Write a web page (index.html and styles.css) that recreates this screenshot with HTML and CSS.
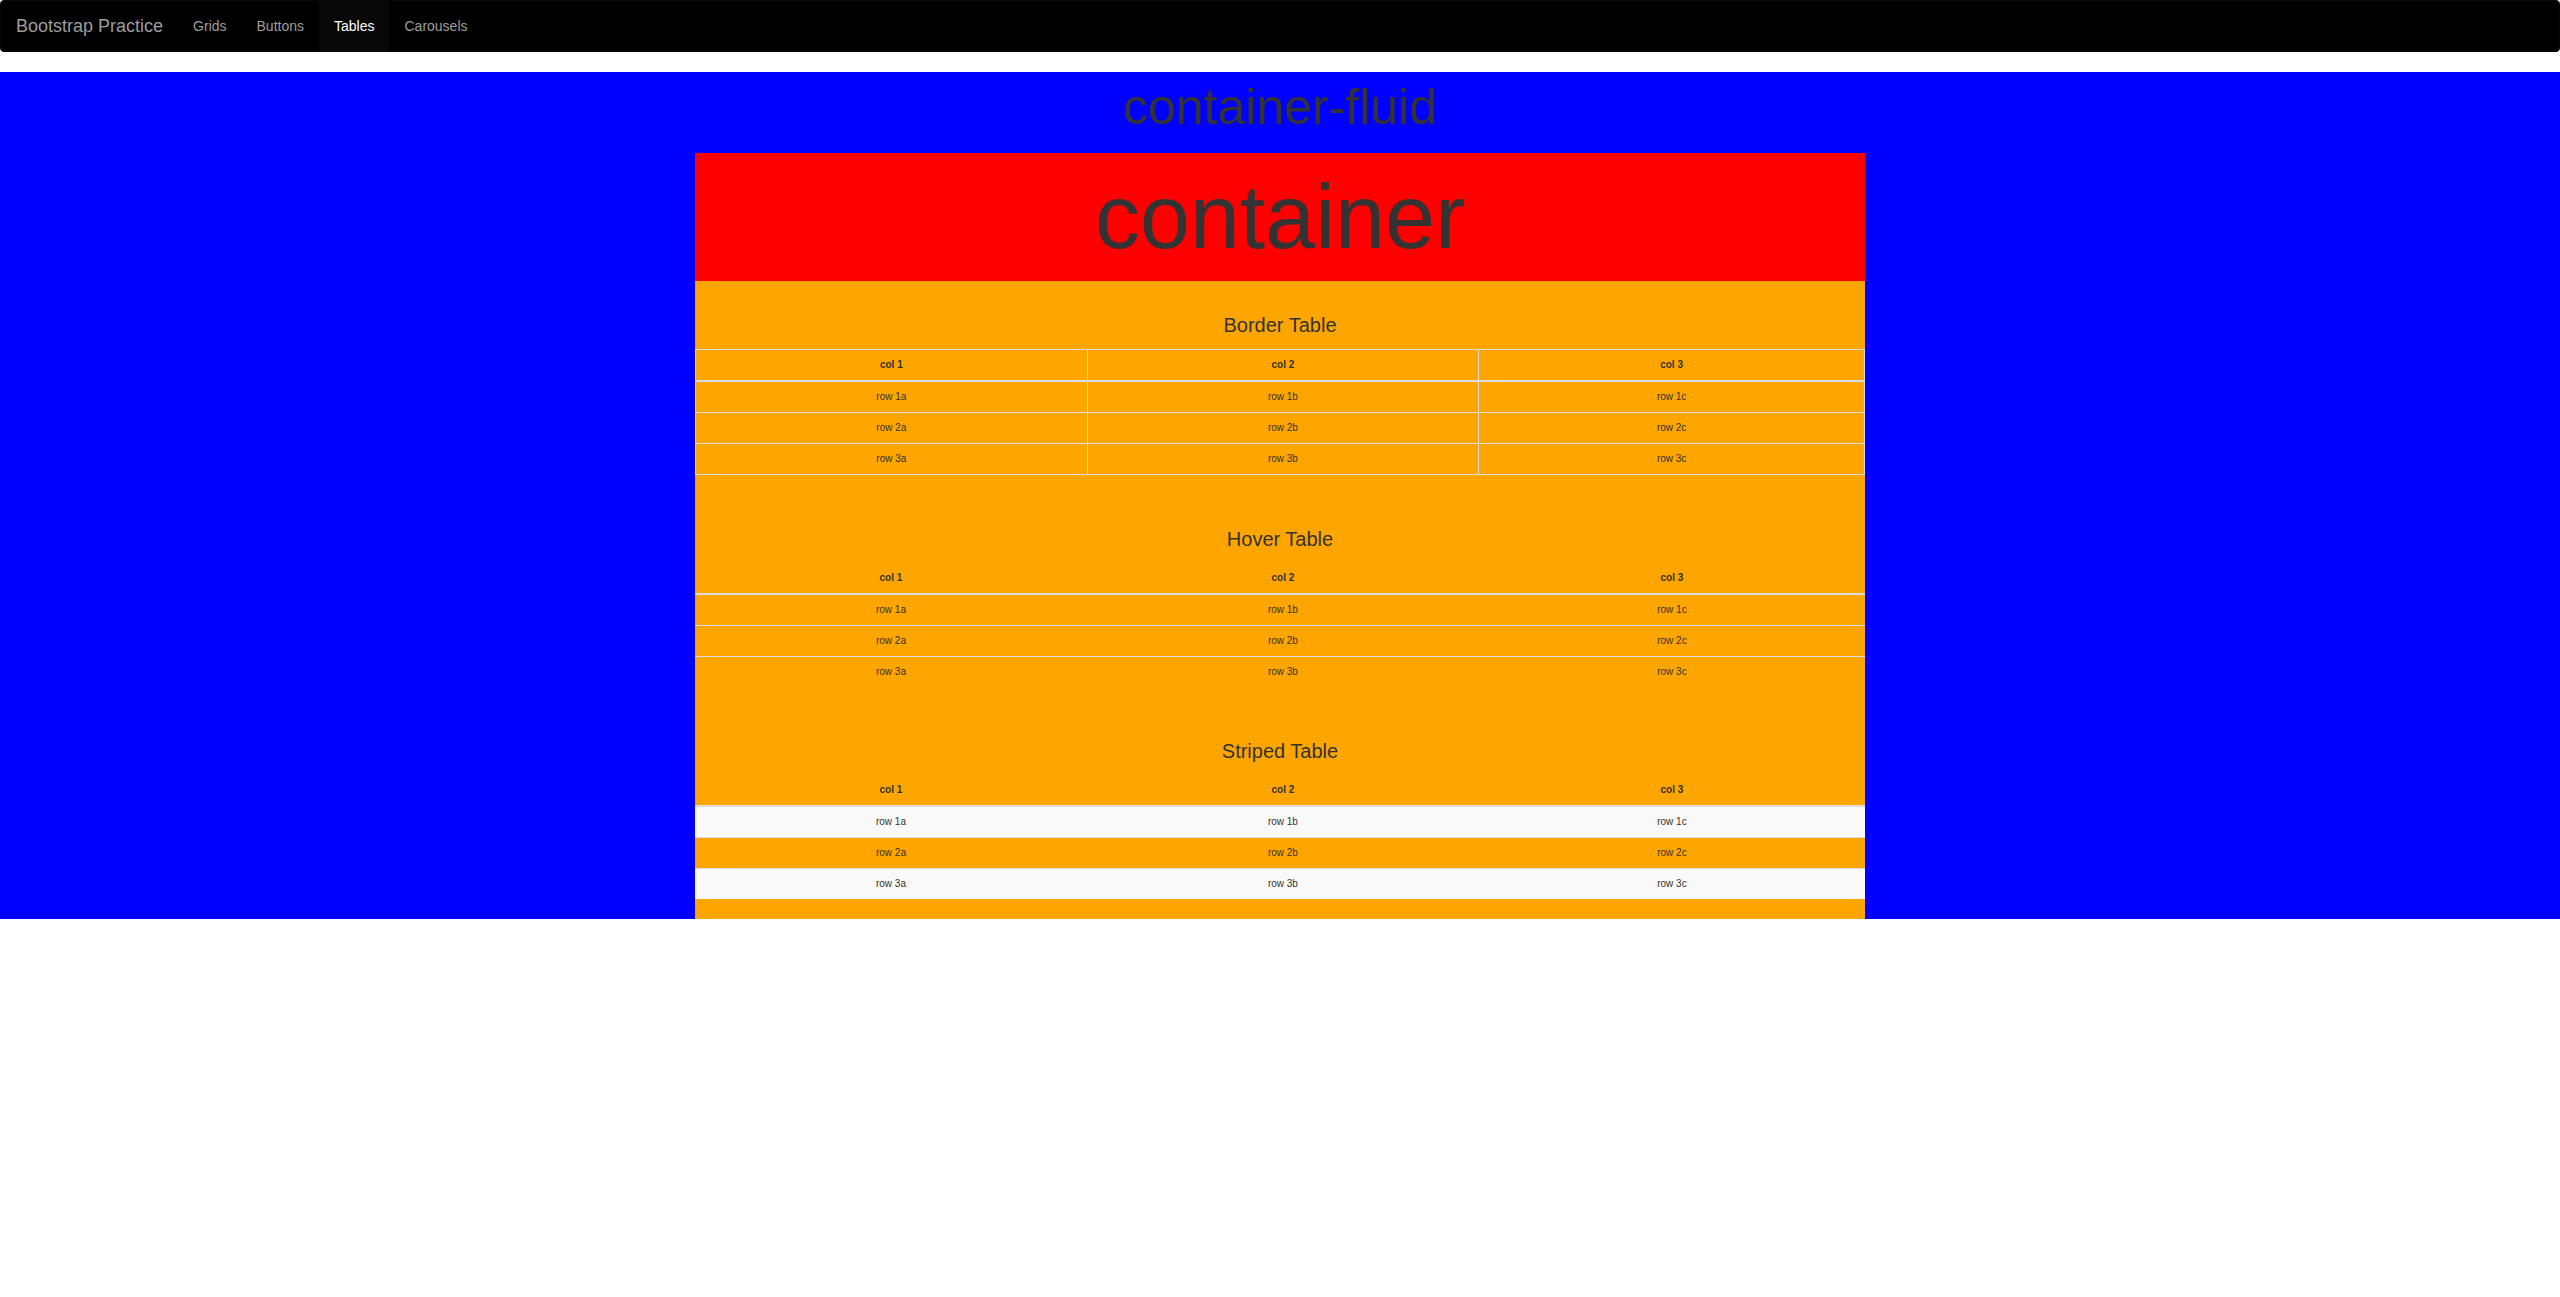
FILE: index.html
```html
<!DOCTYPE html>
<html lang="en">
<head>
<meta charset="utf-8">
<title>Bootstrap Practice</title>
<link rel="stylesheet" href="styles.css">
</head>
<body>
<nav class="navbar">
  <a class="brand" href="#">Bootstrap Practice</a>
  <ul class="nav">
    <li><a href="#">Grids</a></li>
    <li><a href="#">Buttons</a></li>
    <li><a class="active" href="#">Tables</a></li>
    <li><a href="#">Carousels</a></li>
  </ul>
</nav>
<div class="container-fluid">
  <p class="fluid-title">container-fluid</p>
  <main class="container">
    <h1>container</h1>
    <section>
      <h2>Border Table</h2>
      <table class="table bordered">
        <thead><tr><th>col 1</th><th>col 2</th><th>col 3</th></tr></thead>
        <tbody>
          <tr><td>row 1a</td><td>row 1b</td><td>row 1c</td></tr>
          <tr><td>row 2a</td><td>row 2b</td><td>row 2c</td></tr>
          <tr><td>row 3a</td><td>row 3b</td><td>row 3c</td></tr>
        </tbody>
      </table>
    </section>
    <section>
      <h2>Hover Table</h2>
      <table class="table hover">
        <thead><tr><th>col 1</th><th>col 2</th><th>col 3</th></tr></thead>
        <tbody>
          <tr><td>row 1a</td><td>row 1b</td><td>row 1c</td></tr>
          <tr><td>row 2a</td><td>row 2b</td><td>row 2c</td></tr>
          <tr><td>row 3a</td><td>row 3b</td><td>row 3c</td></tr>
        </tbody>
      </table>
    </section>
    <section>
      <h2>Striped Table</h2>
      <table class="table striped">
        <thead><tr><th>col 1</th><th>col 2</th><th>col 3</th></tr></thead>
        <tbody>
          <tr><td>row 1a</td><td>row 1b</td><td>row 1c</td></tr>
          <tr><td>row 2a</td><td>row 2b</td><td>row 2c</td></tr>
          <tr><td>row 3a</td><td>row 3b</td><td>row 3c</td></tr>
        </tbody>
      </table>
    </section>
  </main>
</div>
</body>
</html>
```
FILE: styles.css
```css
* { box-sizing: border-box; }
body {
  margin: 0;
  background: #fff;
  color: #333;
  font: 14px/20px "Liberation Sans", Arial, sans-serif;
}
.navbar {
  display: flex;
  min-height: 52px;
  margin-bottom: 20px;
  border: 1px solid #080808;
  border-radius: 4px;
  background: #000;
}
.navbar a { color: #9d9d9d; text-decoration: none; }
.brand { padding: 15px; font-size: 18px; }
.nav { display: flex; margin: 0; padding: 0; list-style: none; }
.nav a { display: block; padding: 15px; }
.navbar .active { background: #080808; color: #fff; }
.container-fluid {
  padding: 0 15px;
  background: blue;
  text-align: center;
}
.fluid-title { margin: 0 0 10px; font-size: 50px; line-height: 71px; }
.container {
  max-width: 1170px;
  margin: 0 auto;
  background: orange;
  font-size: 10px;
}
h1 { margin: 0; background: red; font-size: 90px; font-weight: 400; line-height: 128px; }
h2 { margin: 0; padding: 30px 0 10px; font-size: 20px; font-weight: 400; line-height: 28px; }
section { padding-bottom: 20px; }
.table { width: 100%; border-collapse: collapse; line-height: 14px; }
.table th, .table td { padding: 8px; border-top: 1px solid #ddd; }
.table thead th { width: 33.5%; border-top: 0; border-bottom: 2px solid #ddd; }
.table thead th:last-child { width: 33%; }
.table.bordered th, .table.bordered td { border: 1px solid #ddd; }
.table.bordered thead th { border-bottom-width: 2px; }
.hover tbody tr:hover { background: #f5f5f5; }
.striped tbody tr:nth-child(odd) { background: #f9f9f9; }
```
